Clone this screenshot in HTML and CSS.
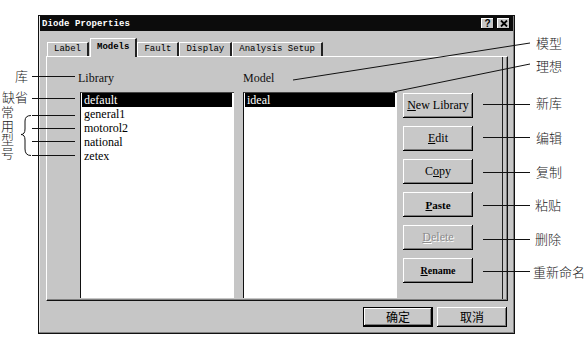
FILE: index.html
```html
<!DOCTYPE html>
<html lang="zh">
  <head>
    <meta charset="UTF-8" />
    <title>Diode Properties</title>
    <link rel="stylesheet" href="styles.css">
  </head>
  <body>
    <div class="figure">
      <div class="dialog">
        <div class="titlebar">
          <span class="title">Diode Properties</span>
          <div class="caption-btns">
            <span class="cbtn">?</span>
            <span class="cbtn">
              <svg width="8" height="7" viewBox="0 0 8 7"><path d="M1 0.5 L7 6.5 M7 0.5 L1 6.5" stroke="#000" stroke-width="1.8"/></svg>
            </span>
          </div>
        </div>

        <div class="tabs">
          <span class="tab">Label</span>
          <span class="tab active">Models</span>
          <span class="tab">Fault</span>
          <span class="tab">Display</span>
          <span class="tab">Analysis Setup</span>
        </div>

        <div class="panel">
          <div class="col">
            <div class="col-label lib">Library</div>
            <ul class="listbox">
              <li class="sel">default</li>
              <li>general1</li>
              <li>motorol2</li>
              <li>national</li>
              <li>zetex</li>
            </ul>
          </div>
          <div class="col">
            <div class="col-label">Model</div>
            <ul class="listbox model">
              <li class="sel">ideal</li>
            </ul>
          </div>
          <div class="btns">
            <button class="btn"><u>N</u>ew Library</button>
            <button class="btn"><u>E</u>dit</button>
            <button class="btn">C<u>o</u>py</button>
            <button class="btn heavy"><u>P</u>aste</button>
            <button class="btn disabled"><u>D</u>elete</button>
            <button class="btn heavy small"><u>R</u>ename</button>
          </div>
        </div>

        <div class="footer">
          <button class="btn cn default">确定</button>
          <button class="btn cn">取消</button>
        </div>
      </div>

      <!-- leader lines for the annotations -->
      <svg class="leaders" width="588" height="348" viewBox="0 0 588 348">
        <g stroke="#111" stroke-width="1" fill="none">
          <path d="M32 76.5 H75"/>
          <path d="M32 98.5 H75"/>
          <path d="M32 115.5 H75"/>
          <path d="M32 128.5 H75"/>
          <path d="M32 141.5 H75"/>
          <path d="M32 155.5 H75"/>
          <path d="M31 115.5 Q25 115.5 25 121 L25 129 Q25 134.5 21 134.5 Q25 134.5 25 140 L25 149 Q25 155.5 31 155.5"/>
          <path d="M293 80 L530 43"/>
          <path d="M393 92 L530 64"/>
          <path d="M483 104.5 H530"/>
          <path d="M483 137.5 H530"/>
          <path d="M483 172.5 H530"/>
          <path d="M483 205.5 H530"/>
          <path d="M483 239.5 H530"/>
          <path d="M483 271.5 H530"/>
        </g>
      </svg>

      <span class="note n-ku">库</span>
      <span class="note n-qs">缺省</span>
      <span class="note n-cy">常用型号</span>
      <span class="note n-mx">模型</span>
      <span class="note n-lx">理想</span>
      <span class="note n-xk">新库</span>
      <span class="note n-bj">编辑</span>
      <span class="note n-fz">复制</span>
      <span class="note n-zt">粘贴</span>
      <span class="note n-sc">删除</span>
      <span class="note n-cm">重新命名</span>
    </div>
  </body>
</html>
```

FILE: styles.css
```css
body {
  margin: 0;
  background: #fff;
}
.figure {
  position: relative;
  width: 588px;
  height: 348px;
  overflow: hidden;
  padding-top: 15px;
  box-sizing: border-box;
}
.dialog {
  margin-left: 38px;
  width: 477px;
  height: 319px;
  box-sizing: border-box;
  border: 1px solid #111;
  background: #c6c6c6;
  box-shadow: inset -1px -1px #808080, inset 1px 1px #e8e8e8;
  display: flex;
  flex-direction: column;
}
.titlebar {
  height: 15px;
  margin: 0 1px;
  background: #0c0c0c;
  display: flex;
  align-items: center;
  justify-content: space-between;
  padding: 0 3px 0 2px;
}
.title {
  font-family: "Liberation Mono", monospace;
  font-weight: bold;
  font-size: 9px;
  color: #fff;
  letter-spacing: 0.1px;
}
.caption-btns {
  display: flex;
  gap: 3px;
}
.cbtn {
  width: 13px;
  height: 11px;
  box-sizing: border-box;
  background: #c6c6c6;
  box-shadow: inset -1px -1px #000, inset 1px 1px #fff;
  display: flex;
  align-items: center;
  justify-content: center;
  font-family: "Liberation Sans", sans-serif;
  font-weight: bold;
  font-size: 10px;
  line-height: 11px;
  color: #000;
}
.tabs {
  height: 25px;
  display: flex;
  align-items: flex-end;
  padding-left: 8px;
  position: relative;
  z-index: 1;
}
.tab {
  height: 14px;
  box-sizing: border-box;
  padding: 0 6px;
  border-top: 1px solid #fff;
  border-left: 1px solid #fff;
  border-right: 2px solid #222;
  font-family: "Liberation Mono", monospace;
  font-size: 9px;
  line-height: 13px;
  color: #000;
  background: #c6c6c6;
}
.tab.active {
  height: 19px;
  margin-bottom: -1px;
  font-weight: bold;
  line-height: 16px;
  margin-left: 1px;
}
.panel {
  margin-left: 7px;
  width: 462px;
  height: 245px;
  box-sizing: border-box;
  border-top: 1px solid #fff;
  border-left: 1px solid #fff;
  border-right: 1px solid #111;
  border-bottom: 1px solid #111;
  box-shadow: inset -1px -1px #808080, inset -4px 0 #c6c6c6, inset -5px 0 #222;
  padding-left: 33px;
  display: flex;
}
.col {
  width: 154px;
  margin-right: 9px;
  display: flex;
  flex-direction: column;
}
.col-label {
  height: 35px;
  box-sizing: border-box;
  padding-top: 14px;
  font-family: "Liberation Serif", serif;
  font-size: 12px;
  line-height: 14px;
  color: #111;
}
.col-label.lib {
  margin-left: -2px;
}
.listbox {
  list-style: none;
  margin: 0;
  padding: 0 2px 0 1px;
  height: 206px;
  box-sizing: border-box;
  background: #fff;
  border-left: 1px solid #111;
  border-top: 1px solid #444;
}
.listbox li {
  height: 14px;
  padding-left: 2px;
  font-family: "Liberation Serif", serif;
  font-size: 12px;
  line-height: 14px;
  color: #000;
}
.listbox li.sel {
  background: #000;
  color: #fff;
}
.btns {
  margin-left: -3px;
  padding-top: 36px;
  display: flex;
  flex-direction: column;
  gap: 8px;
}
.btn {
  width: 70px;
  height: 25px;
  padding: 0;
  border: none;
  background: #c8c8c8;
  box-shadow: inset -1px -1px #000, inset 1px 1px #fff, inset -2px -2px #7a7a7a;
  font-family: "Liberation Serif", serif;
  font-size: 12px;
  color: #000;
}
.btn.heavy {
  font-weight: bold;
  font-size: 11px;
}
.btn.heavy.small {
  font-size: 10px;
}
.btn.disabled {
  color: #8c8c8c;
  text-shadow: 1px 1px 0 #fff;
}
.footer {
  margin-top: 6px;
  padding-right: 7px;
  display: flex;
  justify-content: flex-end;
  gap: 4px;
}
.btn.cn {
  height: 20px;
  font-family: "Noto Sans CJK SC", sans-serif;
  font-size: 12px;
  line-height: 18px;
}
.btn.default {
  box-shadow: inset 0 0 0 1px #000, inset -2px -2px #000, inset 2px 2px #fff, inset -3px -3px #7a7a7a;
}
.leaders {
  position: absolute;
  left: 0;
  top: 0;
  pointer-events: none;
}
.note {
  position: absolute;
  font-family: "Noto Sans CJK SC", sans-serif;
  font-weight: 300;
  font-size: 13px;
  line-height: 16px;
  color: #222;
}
.n-ku { left: 15px; top: 68px; }
.n-qs { left: 2px; top: 89px; }
.n-cy {
  left: 1px;
  top: 105px;
  width: 14px;
  line-height: 13.7px;
}
.n-mx { left: 536px; top: 35px; }
.n-lx { left: 536px; top: 58px; }
.n-xk { left: 536px; top: 95px; }
.n-bj { left: 536px; top: 130px; }
.n-fz { left: 536px; top: 164px; }
.n-zt { left: 535px; top: 197px; }
.n-sc { left: 535px; top: 231px; }
.n-cm { left: 533px; top: 264px; }
```
